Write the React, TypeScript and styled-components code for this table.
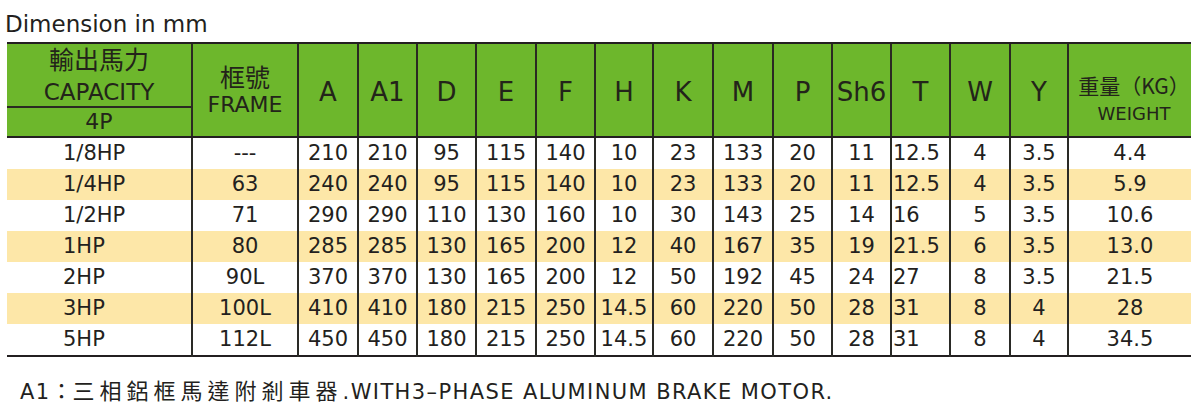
import React from "react";
import styled, { createGlobalStyle } from "styled-components";

const GlobalStyle = createGlobalStyle`
  html, body { margin: 0; padding: 0; background: #ffffff; }
  body { font-family: "DejaVu Sans", "Noto Sans CJK TC", sans-serif; color: #231f20; }
`;

const Page = styled.div`
  width: 1196px;
  height: 409px;
  padding: 0 5px 0 7px;
  box-sizing: border-box;
  overflow: hidden;
`;

const Title = styled.div`
  margin-left: -2px;
  padding-top: 6px;
  height: 36px;
  line-height: 36px;
  font-size: 23px;
  white-space: nowrap;
`;

const Table = styled.table`
  width: 1184px;
  table-layout: fixed;
  border-collapse: collapse;
  border-spacing: 0;
  border-bottom: 2px solid #231f20;
`;

const Head = styled.th<{ $first?: boolean; $padTop?: number; $padLeft?: number }>`
  background: #6db72c;
  border-top: 2px solid #231f20;
  border-bottom: 2px solid #231f20;
  border-left: ${(p) => (p.$first ? "none" : "2px solid #2a2a22")};
  padding: ${(p) => p.$padTop ?? 0}px 0 0 ${(p) => p.$padLeft ?? 0}px;
  font-weight: normal;
  text-align: center;
  vertical-align: middle;
  color: #23241a;
  line-height: 1;
`;

const CapTop = styled.th`
  background: #6db72c;
  border-top: 2px solid #231f20;
  border-bottom: 2px solid #2a2a22;
  padding: 0;
  font-weight: normal;
  color: #23241a;
  height: 62px;
  vertical-align: middle;
`;

const CapBottom = styled.th`
  background: #6db72c;
  border-bottom: 2px solid #231f20;
  padding: 0;
  font-weight: normal;
  color: #23241a;
  height: 28px;
  font-size: 22px;
  line-height: 1;
  vertical-align: middle;
`;

const Stack = styled.div<{ $gap?: number }>`
  display: flex;
  flex-direction: column;
  align-items: center;
  gap: ${(p) => p.$gap ?? 2}px;
`;

const Cjk = styled.span<{ $size: number; $spacing?: number }>`
  font-family: "Noto Sans CJK TC", sans-serif;
  font-size: ${(p) => p.$size}px;
  letter-spacing: ${(p) => p.$spacing ?? 0}px;
  line-height: 1;
  white-space: nowrap;
`;

const Latin = styled.span<{ $size: number }>`
  font-family: "DejaVu Sans", sans-serif;
  font-size: ${(p) => p.$size}px;
  line-height: 1;
`;

const Letter = styled.span`
  font-size: 26px;
  position: relative;
  top: 2px;
`;

const Row = styled.tr<{ $stripe: boolean }>`
  background: ${(p) => (p.$stripe ? "#fde7a8" : "transparent")};
`;

const Cell = styled.td<{ $align: "left" | "center"; $pad: number; $first?: boolean }>`
  height: 31px;
  padding: 0 0 0 ${(p) => p.$pad}px;
  font-size: 21px;
  line-height: 1;
  text-align: ${(p) => p.$align};
  vertical-align: middle;
  white-space: nowrap;
  border-left: ${(p) => (p.$first ? "none" : "2px solid #2a2a26")};
`;

const Footer = styled.div`
  margin-top: 20px;
  margin-left: 13px;
  line-height: 24px;
  white-space: nowrap;
  display: flex;
  align-items: baseline;
`;

const FootLatin = styled.span`
  font-family: "DejaVu Sans", sans-serif;
  font-size: 21px;
  letter-spacing: 1.4px;
`;

const FootCjk = styled.span<{ $spacing: number }>`
  font-family: "Noto Sans CJK TC", sans-serif;
  font-size: 22px;
  letter-spacing: ${(p) => p.$spacing}px;
`;

const widths = [185, 106, 60, 59, 59, 60, 59, 58, 60, 60, 59, 59, 59, 60, 58, 123];
const letters = ["A", "A1", "D", "E", "F", "H", "K", "M", "P", "Sh6", "T", "W", "Y"];

const rows: string[][] = [
  ["1/8HP", "---", "210", "210", "95", "115", "140", "10", "23", "133", "20", "11", "12.5", "4", "3.5", "4.4"],
  ["1/4HP", "63", "240", "240", "95", "115", "140", "10", "23", "133", "20", "11", "12.5", "4", "3.5", "5.9"],
  ["1/2HP", "71", "290", "290", "110", "130", "160", "10", "30", "143", "25", "14", "16", "5", "3.5", "10.6"],
  ["1HP", "80", "285", "285", "130", "165", "200", "12", "40", "167", "35", "19", "21.5", "6", "3.5", "13.0"],
  ["2HP", "90L", "370", "370", "130", "165", "200", "12", "50", "192", "45", "24", "27", "8", "3.5", "21.5"],
  ["3HP", "100L", "410", "410", "180", "215", "250", "14.5", "60", "220", "50", "28", "31", "8", "4", "28"],
  ["5HP", "112L", "450", "450", "180", "215", "250", "14.5", "60", "220", "50", "28", "31", "8", "4", "34.5"],
];

export default function App() {
  return (
    <>
      <GlobalStyle />
      <Page>
        <Title>Dimension in mm</Title>
        <Table>
          <colgroup>
            {widths.map((w, i) => (
              <col key={i} style={{ width: w }} />
            ))}
          </colgroup>
          <thead>
            <tr>
              <CapTop>
                <Stack $gap={10}>
                  <Cjk $size={25}>輸出馬力</Cjk>
                  <Latin $size={23}>CAPACITY</Latin>
                </Stack>
              </CapTop>
              <Head rowSpan={2}>
                <Stack $gap={5}>
                  <Cjk $size={25}>框號</Cjk>
                  <Latin $size={22}>FRAME</Latin>
                </Stack>
              </Head>
              {letters.map((l) => (
                <Head key={l} rowSpan={2}>
                  <Letter>{l}</Letter>
                </Head>
              ))}
              <Head rowSpan={2} $padTop={18} $padLeft={8}>
                <Stack $gap={9}>
                  <Cjk $size={21}>重量（KG）</Cjk>
                  <Latin $size={18}>WEIGHT</Latin>
                </Stack>
              </Head>
            </tr>
            <tr>
              <CapBottom>4P</CapBottom>
            </tr>
          </thead>
          <tbody>
            {rows.map((r, ri) => (
              <Row key={ri} $stripe={ri % 2 === 1}>
                {r.map((v, ci) => (
                  <Cell
                    key={ci}
                    $first={ci === 0}
                    $align={ci === 0 || ci === 12 ? "left" : "center"}
                    $pad={ci === 0 ? 56 : ci === 12 ? 1 : 0}
                  >
                    {v}
                  </Cell>
                ))}
              </Row>
            ))}
          </tbody>
        </Table>
        <Footer>
          <FootLatin>A1</FootLatin>
          <FootCjk $spacing={0}>：</FootCjk>
          <FootCjk $spacing={5}>三相鋁框馬達附剎車器</FootCjk>
          <FootLatin>.WITH3–PHASE ALUMINUM BRAKE MOTOR.</FootLatin>
        </Footer>
      </Page>
    </>
  );
}
